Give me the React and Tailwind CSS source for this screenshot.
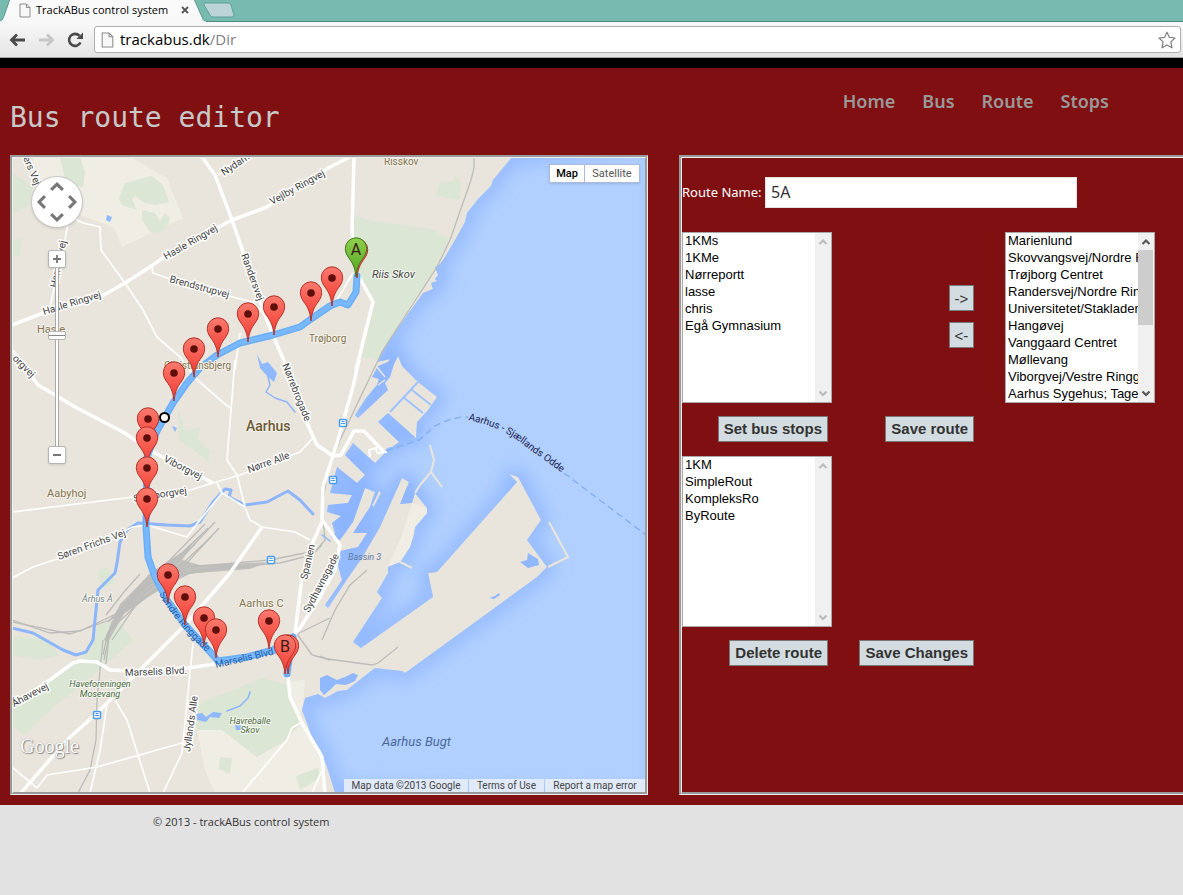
import React from "react";

const LAND = "#e9e5dc";
const SEA_PATH =
  "M512 157 L503 168 L493 180 L491 186 L478 199 L467 213 L465 222 L455 240 L445 257 L440 264 L435 267 L438 275 L435 279 L437 281 L431 283 L433 289 L423 293 L410 311 L398 327 L383 350 L377 362 L390 359 L388 362 L378 366 L372 377 L379 379 L377 385 L366 398 L355 415 L358 418 L388 390 L385 383 L390 377 L394 364 L398 356 L402 366 L407 371 L418 382 L437 397 L428 410 L417 422 L416 438 L388 413 L378 422 L399 442 L392 447 L387 448 L383 455 L375 463 L353 443 L345 455 L365 475 L357 483 L337 467 L330 493 L352 495 L348 503 L328 505 L327 512 L341 516 L332 523 L335 533 L331 537 L340 540 L353 522 L365 488 L375 492 L370 507 L353 533 L367 533 L358 547 L340 551 L338 566 L342 580 L325 605 L328 608 L348 578 L362 558 L380 527 L402 478 L409 482 L400 504 L412 503 L415 493 L427 508 L427 513 L415 527 L414 535 L410 547 L400 562 L388 567 L388 573 L377 592 L382 598 L353 642 L361 648 L433 597 L428 573 L437 572 L517 482 L509 474 L515 476 L518 477 L541 520 L527 540 L547 567 L537 577 L405 673 L402 671 L375 668 L353 685 L347 690 L338 691 L325 698 L318 694 L305 698 L302 710 L312 737 L321 751 L328 770 L335 793 L660 800 L660 140 Z";

const WIDE_ROADS = [
  "M202 157 L215 175 L232 220 L263 310 L275 340 L285 363 L307 423 L317 445 L333 456 L341 455 L354 431 L364 431 L384 452",
  "M12 325 L43 313 L100 297 L125 283 L150 267 L167 255 L217 228 L232 220 L267 207 L290 192 L330 167 L350 157",
  "M354 157 L352 233 L357 273 L373 302 L356 370",
  "M12 350 L38 385 L77 408 L123 432 L153 452 L213 483",
  "M262 527 L230 573 L187 623 L97 713 L67 740 L20 794",
  "M12 703 L43 685 L73 663 L80 661 L97 662 L110 670 L130 671 L187 668 L215 664",
  "M288 677 L290 697 L302 723 L322 757 L325 793",
  "M359 360 L353 387 L337 443 L323 487 L322 520 L340 545 L335 570 L320 597 L300 628 L295 634",
  "M322 522 L313 542 L302 577 L295 633",
];

const THIN_ROADS = [
  "M73 218 L83 223 L100 227 L101 250 L125 283 L143 310 L157 337 L180 357 L195 378 L225 404 L230 408",
  "M152 267 L153 273 L173 280 L233 297 L252 302 L262 312",
  "M68 223 L65 240 L50 307",
  "M218 175 L253 157",
  "M213 483 L240 475 L300 452 L313 438",
  "M12 512 L133 497 L190 490 L213 483",
  "M12 578 L33 567 L60 558 L133 527 L147 525 L187 537 L200 520 L222 493 L217 483",
  "M235 360 L227 460 L237 475 L245 507 L250 520 L262 527 L295 532 L310 540",
  "M222 493 L245 507",
  "M193 643 L187 703 L182 753 L163 793",
  "M115 700 L127 720 L150 793",
  "M107 702 L104 725 L100 750 L90 793",
  "M37 788 L47 775 L97 767 L182 743",
  "M12 767 L37 788",
  "M302 722 L292 728 L287 740 L242 793",
  "M322 770 L312 793",
  "M240 333 L235 370",
  "M353 273 L337 300",
];

const RAILS = [
  "M474 157 L474 168 L471 180 L450 240 L437 267 L383 350 L340 440 L328 470 L322 507 L325 540 L315 552",
  "M322 545 L312 555 L280 563 L220 568 L180 575 L140 600 L110 620 L70 634 L12 622",
  "M315 551 L270 560 L200 566 L160 580 L120 612 L80 631 L50 633 L12 620",
  "M103 640 L97 700 L96 740 L90 770 L78 793",
  "M322 640 L335 610 L350 585 L367 570",
  "M297 634 L312 655 L330 660",
  "M297 634 L330 618",
  "M320 656 L328 659 L372 665 L378 663 L398 647",
];

const YARD = [
  "M215 522 L180 560 L140 592 L112 622 L104 660",
  "M208 528 L176 560 L136 596 L110 628 L106 664",
  "M219 528 L184 566 L140 602 L108 632 L103 655",
  "M205 524 L170 560 L138 588 L114 618",
  "M212 536 L180 566 L145 592 L112 640",
  "M200 536 L168 566 L134 594 L116 625",
  "M240 566 L190 566 L150 584 L116 612",
  "M250 567 L196 570 L152 592 L118 616",
  "M195 545 L150 574 L128 600 L108 622",
  "M188 549 L150 580 L124 604 L106 640",
  "M140 574 L124 592 L106 615",
];

const ROUTE =
  "M357 276 L356 292 L348 305 L340 302 L330 306 L311 319 L300 327 L273 335 L240 343 L217 355 L200 368 L187 383 L173 403 L157 431 L147 457 L146 527 L148 557 L155 577 L167 600 L185 625 L213 655 L218 661 L247 657 L273 650 L293 637 L290 652 L287 674";

const PINS = [
  [332, 278], [311, 293], [274, 307], [248, 314], [218, 329], [194, 349],
  [174, 373], [148, 419], [147, 438], [147, 468], [147, 499], [168, 575],
  [185, 597], [204, 618], [269, 621], [216, 630],
];

const ROAD_LABELS = [
  ["Nydamsvej", 224, 176, -34],
  ["Vejlby Ringvej", 272, 205, -29],
  ["Hasle Ringvej", 166, 260, -30],
  ["Hasle Ringvej", 44, 315, -17],
  ["Brendstrupvej", 169, 282, 15],
  ["Randersvej", 241, 255, 70],
  ["Herredsvej", 57, 288, -79],
  ["ers Vej", 23, 158, 67],
  ["orgvej", 12, 359, 45],
  ["Nørrebrogade", 282, 365, 68],
  ["Viborgvej", 163, 461, 27],
  ["Silkeborgvej", 134, 502, -9],
  ["Nørre Alle", 249, 473, -20],
  ["Søren Frichs Vej", 59, 560, -20],
  ["Spanien", 307, 580, -77],
  ["Sydhavnsgade", 309, 613, -62],
  ["Marselis Blvd.", 125, 676, -2],
  ["Jyllands Alle", 190, 752, -82],
  ["Åhavevej", 14, 707, -28],
];

const START_STOPS = ["1KMs", "1KMe", "Nørreportt", "lasse", "chris", "Egå Gymnasium"];
const ROUTES = ["1KM", "SimpleRout", "KompleksRo", "ByRoute"];
const STOPS = [
  "Marienlund",
  "Skovvangsvej/Nordre Ringgade",
  "Trøjborg Centret",
  "Randersvej/Nordre Ringgade",
  "Universitetet/Stakladen",
  "Hangøvej",
  "Vanggaard Centret",
  "Møllevang",
  "Viborgvej/Vestre Ringgade",
  "Aarhus Sygehus; Tage Hansens",
];

function Pin({ x, y, letter, green }) {
  return (
    <g transform={`translate(${x} ${y})`}>
      <path
        d="M0 28 C-0.8 20 -2.5 15.500 -6 10.500 C-9 6.500 -10.700 3.500 -10.700 -0.500 A10.700 10.700 0 0 1 10.700 -0.500 C10.700 3.500 9 6.500 6 10.500 C2.500 15.500 0.800 20 0 28Z"
        fill={green ? "url(#pinGreen)" : "url(#pinRed)"}
        stroke={green ? "#3e7a1c" : "#b2322b"}
        strokeWidth="1"
      />
      {letter ? (
        <text y="6" textAnchor="middle" fontSize="16" fill="#3a1a14">{letter}</text>
      ) : (
        <circle r="3.800" fill="#5e0f0c" />
      )}
    </g>
  );
}

function Station({ x, y }) {
  return (
    <g transform={`translate(${x} ${y})`}>
      <rect x="-3.500" y="-3.500" width="7" height="7" rx="1" fill="#fff" stroke="#4a9be8" strokeWidth="1.500" />
      <path d="M-2 0.500H2M-1.500 -1.500H1.500" stroke="#4a9be8" />
    </g>
  );
}

function MapDrawing() {
  return (
    <svg
      viewBox="13 158 632 634"
      preserveAspectRatio="xMidYMid slice"
      className="block h-[634px] w-full font-[Roboto,sans-serif]"
      role="img"
      aria-label="Map of Aarhus with the bus route"
    >
      <defs>
        <clipPath id="sea"><path d={SEA_PATH} /></clipPath>
        <filter id="soft" x="-20%" y="-20%" width="140%" height="140%"><feGaussianBlur stdDeviation="9" /></filter>
        <linearGradient id="pinRed" x1="0" y1="0" x2="0" y2="1">
          <stop offset="0" stopColor="#fb7a6e" /><stop offset="1" stopColor="#f0392f" />
        </linearGradient>
        <linearGradient id="pinGreen" x1="0" y1="0" x2="0" y2="1">
          <stop offset="0" stopColor="#8fd04c" /><stop offset="1" stopColor="#4fa423" />
        </linearGradient>
        <path id="ferryLabel" d="M468 420 C500 427 515 437 530 450 C545 460 560 471 585 491" />
        <path id="ringLabel" d="M159 594 C172 617 190 638 216 660" />
      </defs>

      <rect x="-400" y="100" width="1500" height="760" fill={LAND} />

      <g fill="#f0ede4">
        <path d="M33 157H130L167 178L183 218L122 247L113 227L80 215L60 200L34 185Z" />
        <path d="M197 730L222 730L257 757L290 735L304 722L325 765V793H215L205 770Z" />
        <path d="M287 682L305 680L303 705L300 715L290 700Z" />
      </g>
      <g fill="#dce6d5">
        <path d="M353 215L373 221L430 229L449 238L437 267L410 306L377 360L362 357L373 303L358 273Z" />
        <path d="M440 182L453 181L455 175L461 182L460 197L457 201L436 195Z" />
        <path d="M125 183L152 176L163 185L169 202L155 205L145 203L135 196L132 199L137 210L122 205L119 198Z" />
        <path d="M142 210L155 213L160 221L165 213L170 218L167 227L158 233L150 232L142 220Z" />
        <path d="M60 157H80L85 172L83 187L66 184Z" />
        <path d="M12 173L33 187L28 207L12 213Z" />
        <path d="M13 240L22 238L19 257L13 256Z" />
        <path d="M178 410L186 431L200 427L198 440L210 451L208 461L193 450L179 440Z" />
        <path d="M12 637L47 638L60 655L40 660L12 655Z" />
        <path d="M12 700L50 681L83 657L97 625L117 620L133 640L120 652L75 690L48 712L25 735L12 726Z" />
        <path d="M98 570L107 568L115 582L101 590Z" />
        <path d="M195 705L220 695L262 678L287 685L291 703L302 720L287 740L257 757L222 730L197 730Z" />
        <path d="M296 776L318 768L320 778L300 790Z" />
        <path d="M220 757L232 758L230 774L219 769Z" />
      </g>

      <path d={SEA_PATH} fill="#b1d0ff" />
      <g clipPath="url(#sea)">
        <path d={SEA_PATH} fill="none" stroke="#8ab2ff" strokeWidth="12" filter="url(#soft)" />
      </g>
      <g fill="#8fb8ff">
        <path d="M320 678L327 675L337 680L345 677L353 673L358 675L355 681L346 685L336 684L331 689L324 695L320 690Z" />
        <path d="M520 562L527 560L528 553L538 559L539 565L528 568Z" />
        <path d="M489 598L495 596L499 593L500 595L494 599Z" />
        <path d="M257 354L262 364L268 362L277 373L274 382L268 377L260 368Z" />
        <path d="M107 215L112 217L110 222L106 220Z" />
        <path d="M172 426L177 428L175 432Z" />
        <path d="M196 714L202 713L206 717L213 712L222 713L219 718L210 717L206 722L197 720Z" />
        <path d="M235 725L244 726L241 730L236 730Z" />
      </g>
      <path d="M385 377L377 367M385 380L378 385" stroke={LAND} strokeWidth="1.500" />
      <path d="M390 412L418 382M403 397L423 413M412 390L431 405" stroke="#9fc3ff" strokeWidth="2" />
      <path d="M412 503L427 508V513L415 527L410 547L400 562L388 566L400 540Z" fill="#f0ede4" />
      <g fill="none" stroke={LAND} strokeWidth="2">
        <path d="M430 445L434 460L431 472L420 485L415 493M431 472L442 487" />
        <path d="M549 522L568 557L548 567M400 562L412 568M380 492L373 506" />
      </g>
      <path d="M386 451L419 440L435 426C445 421 455 417 468 417" fill="none" stroke="#86b0f5" strokeWidth="1.500" strokeDasharray="7 4" />
      <path d="M564 473L646 535" fill="none" stroke="#86b0f5" strokeWidth="1.500" strokeDasharray="7 4" />

      <path d="M192 545L150 574L120 604L104 640L108 642L124 614L150 596L186 574L250 569L270 562L200 565L182 560Z" fill="#c2c1be" />
      <g fill="none" stroke="#bcbcba" strokeWidth="1.300">
        {RAILS.map((d) => <path key={d} d={d} />)}
        {YARD.map((d) => <path key={d} d={d} />)}
      </g>
      <g fill="none" stroke="#8cb5fb" strokeLinejoin="round" strokeLinecap="round">
        <path strokeWidth="3" d="M138 523L167 525L190 526L200 522L213 502L225 489L231 490L229 497L245 505L267 502L288 491L300 500L313 514M138 523L127 530L120 542L117 563L115 573L98 590L93 640L86 652L76 655L63 650L33 633L12 628" />
        <path strokeWidth="1.500" d="M268 377L270 385L266 392L275 398L287 402L295 412M227 711L240 706L248 698L250 692M322 535L330 541" />
      </g>

      <g fill="none" stroke="#fff" strokeLinejoin="round">
        {THIN_ROADS.map((d) => <path key={d} d={d} strokeWidth="1.700" />)}
        {WIDE_ROADS.map((d) => <path key={d} d={d} strokeWidth="3.500" />)}
        <path d="M370 457L369 450L376 448L377 453L387 452" strokeWidth="2" />
      </g>
      <path d={ROUTE} fill="none" stroke="#6baef5" strokeWidth="7" strokeLinejoin="round" strokeLinecap="round" />
      <path d={ROUTE} fill="none" stroke="#78b8ff" strokeWidth="4" strokeLinejoin="round" />

      <Station x={343} y={423} />
      <Station x={333} y={480} />
      <Station x={271} y={560} />
      <Station x={97} y={715} />

      <g stroke="#fff" strokeWidth="3" strokeLinejoin="round" paintOrder="stroke" fill="#444" fontSize="10">
        {ROAD_LABELS.map(([t, x, y, a], i) => (
          <text key={i} transform={`translate(${x} ${y}) rotate(${a})`}>{t}</text>
        ))}
      </g>
      <g fontSize="10" fill="#2460a8">
        <text><textPath href="#ringLabel">Søndre Ringgade</textPath></text>
        <text transform="translate(216 668) rotate(-13)">Marselis Blvd.</text>
      </g>
      <g stroke="#f4f1ea" strokeWidth="2" strokeLinejoin="round" paintOrder="stroke" fill="#857550">
        <text x="384" y="165" fontSize="10">Risskov</text>
        <text x="309" y="342" fontSize="10">Trøjborg</text>
        <text x="37" y="333" fontSize="11">Hasle</text>
        <text x="164" y="369" fontSize="10">Christiansbjerg</text>
        <text x="47" y="497" fontSize="11">Aabyhoj</text>
        <text x="239" y="607" fontSize="11">Aarhus C</text>
        <text x="246" y="431" fontSize="14" fontWeight="500" fill="#6b5a35">Aarhus</text>
      </g>
      <g stroke="#f4f6ee" strokeWidth="2" strokeLinejoin="round" paintOrder="stroke" fontStyle="italic">
        <text x="372" y="278" fontSize="11" fill="#444">Riis Skov</text>
        <text x="82" y="602" fontSize="9" fill="#7b8794">Århus Å</text>
        <g fontSize="9" fill="#4c6b44" textAnchor="middle">
          <text x="100" y="687">Haveforeningen</text>
          <text x="100" y="697">Mosevang</text>
          <text x="250" y="724">Havreballe</text>
          <text x="250" y="733">Skov</text>
        </g>
      </g>
      <text x="348" y="560" fontSize="9" fontStyle="italic" fill="#5f7ba5">Bassin 3</text>
      <text x="382" y="746" fontSize="13" fontStyle="italic" fill="#4a6899">Aarhus Bugt</text>
      <text fontSize="10" fill="#20204f"><textPath href="#ferryLabel">Aarhus - Sjællands Odde</textPath></text>

      <circle cx="164.500" cy="417.500" r="4.500" fill="#fff" stroke="#000" strokeWidth="2" />
      {PINS.map(([x, y]) => <Pin key={`${x}-${y}`} x={x} y={y} />)}
      <Pin x={357} y={250} />
      <Pin x={356} y={249} letter="A" green />
      <Pin x={288} y={646} />
      <Pin x={285} y={646} letter="B" />
    </svg>
  );
}

function Chevron({ className }) {
  return (
    <svg viewBox="0 0 12 12" className={`size-[14px] ${className}`} aria-hidden="true">
      <path d="M1 8.500L6 3.500L11 8.500" fill="none" stroke="#777" strokeWidth="2.600" />
    </svg>
  );
}

function MapPanel() {
  const zoomButton =
    "flex h-[18px] w-[18px] items-center justify-center rounded-[2px] border border-[#b5b5b5] bg-white shadow-sm";
  return (
    <section className="min-w-0 flex-1 border-t-2 border-r border-b border-l-2 border-t-[#9a9a9a] border-r-[#eee] border-b-[#eee] border-l-[#9a9a9a]">
      <div className="relative overflow-hidden border-t border-r-2 border-b-2 border-l border-t-[#eee] border-r-[#9a9a9a] border-b-[#9a9a9a] border-l-[#eee]">
        <MapDrawing />

        <div className="absolute top-[18px] left-[18px] flex w-[52px] flex-col items-center">
          <div className="grid size-[52px] grid-cols-3 grid-rows-3 place-items-center rounded-full border border-[#c8c8c8] bg-white p-[3px] shadow">
            <button type="button" aria-label="Pan up" className="col-start-2 row-start-1"><Chevron className="" /></button>
            <button type="button" aria-label="Pan left" className="col-start-1 row-start-2"><Chevron className="-rotate-90" /></button>
            <button type="button" aria-label="Pan right" className="col-start-3 row-start-2"><Chevron className="rotate-90" /></button>
            <button type="button" aria-label="Pan down" className="col-start-2 row-start-3"><Chevron className="rotate-180" /></button>
          </div>
          <button type="button" aria-label="Zoom in" className={`mt-[22px] ${zoomButton}`}>
            <svg viewBox="0 0 8 8" className="size-2"><path d="M4 0V8M0 4H8" stroke="#777" strokeWidth="1.800" /></svg>
          </button>
          <input
            type="range"
            aria-label="Zoom level"
            min="0"
            max="16"
            defaultValue="10"
            className="m-0 h-[178px] w-[18px] appearance-none bg-[linear-gradient(90deg,transparent_7px,#aaa_7px,#aaa_8px,#fff_8px,#fff_10px,#aaa_10px,#aaa_11px,transparent_11px)] [direction:rtl] [writing-mode:vertical-lr] [&::-webkit-slider-thumb]:h-[9px] [&::-webkit-slider-thumb]:w-[18px] [&::-webkit-slider-thumb]:appearance-none [&::-webkit-slider-thumb]:rounded-[2px] [&::-webkit-slider-thumb]:border [&::-webkit-slider-thumb]:border-[#b5b5b5] [&::-webkit-slider-thumb]:bg-[linear-gradient(#fff_3px,#888_3px,#888_4px,#fff_4px)]"
          />
          <button type="button" aria-label="Zoom out" className={zoomButton}>
            <svg viewBox="0 0 8 8" className="size-2"><path d="M0 4H8" stroke="#777" strokeWidth="2" /></svg>
          </button>
        </div>

        <div className="absolute top-[6px] right-[5px] flex h-[19px] border border-[#a9bbdf] bg-white font-[Roboto,sans-serif] text-[11px] leading-[17px] shadow-sm">
          <button type="button" className="w-[34px] font-medium text-black">Map</button>
          <button type="button" className="w-[55px] border-l border-[#a9bbdf] text-[#565656]">Satellite</button>
        </div>

        <a
          href="#google"
          className="absolute bottom-[34px] left-[7px] font-['Liberation_Serif',serif] text-[20px] leading-6 text-white [text-shadow:1px_1px_1px_#888,0_0_1px_#888]"
        >
          Google
        </a>

        <div className="absolute right-0 bottom-0 flex gap-px font-[Roboto,sans-serif] text-[10px] leading-[13px] text-[#444]">
          <span className="w-[124px] bg-[#e1eaf9] text-center">Map data ©2013 Google</span>
          <a href="#terms" className="w-[75px] bg-[#e1eaf9] text-center">Terms of Use</a>
          <a href="#report" className="w-[100px] bg-[#e1eaf9] text-center">Report a map error</a>
        </div>
      </div>
    </section>
  );
}

function ListBox({ label, items, scrollable }) {
  const arrow = scrollable ? "#555" : "#bcbcbc";
  return (
    <div className="flex h-[171px] w-[150px] border border-[#a9a9a9] bg-white">
      <select
        multiple
        size={10}
        aria-label={label}
        className="h-full min-w-0 flex-1 appearance-none overflow-hidden bg-white p-0 font-['Liberation_Sans',sans-serif] text-[13px] text-black outline-none"
      >
        {items.map((item) => (
          <option key={item} className="h-[17px] min-h-0 px-[2px] py-0 leading-[18px]">{item}</option>
        ))}
      </select>
      <div className="flex w-4 flex-col items-center bg-[#f0f0f0]" aria-hidden="true">
        <svg viewBox="0 0 16 17" className="h-[17px] w-4"><path d="M4.500 11L8 7.500L11.500 11" fill="none" stroke={arrow} strokeWidth="2.200" /></svg>
        <div className="flex-1 self-stretch">
          {scrollable && <div className="h-[75px] w-[15px] bg-[#cdcdcd]" />}
        </div>
        <svg viewBox="0 0 16 17" className="h-[17px] w-4"><path d="M4.500 6.500L8 10L11.500 6.500" fill="none" stroke={arrow} strokeWidth="2.200" /></svg>
      </div>
    </div>
  );
}

function ActionButton({ children }) {
  return (
    <button
      type="button"
      className="h-[26px] border border-[#787878] bg-[#d3dce0] px-[5px] font-['Liberation_Sans',sans-serif] text-[15px] leading-6 font-semibold whitespace-nowrap text-[#333]"
    >
      {children}
    </button>
  );
}

function MoveButton({ label, children }) {
  return (
    <button
      type="button"
      aria-label={label}
      className="h-[26px] w-[25px] border border-[#787878] bg-[#d3dce0] pt-px text-center font-['Liberation_Sans',sans-serif] text-[15px] leading-6 whitespace-nowrap text-[#333]"
    >
      {children}
    </button>
  );
}

function EditorPanel() {
  return (
    <section className="w-[504px] shrink-0 border-t-2 border-b border-l-2 border-t-[#9a9a9a] border-b-[#eee] border-l-[#9a9a9a]">
      <div className="h-full border-t border-b-2 border-l border-t-[#eee] border-b-[#9a9a9a] border-l-[#eee] pt-[19px]">
        <div className="flex items-center gap-1">
          <label htmlFor="route-name" className="w-[79px] pt-px text-[13px] whitespace-nowrap text-white">Route Name:</label>
          <input
            id="route-name"
            type="text"
            defaultValue="5A"
            className="h-[31px] w-[312px] border border-[#e2e2e2] bg-white px-[5px] pb-[2px] text-[16px] text-[#333] outline-none"
          />
        </div>
        <div className="mt-6 grid grid-cols-[150px_142px_auto]">
          <ListBox label="Route end points" items={START_STOPS} />
          <div className="flex flex-col items-end gap-[11px] pt-[53px]">
            <MoveButton label="Add stop">-&gt;</MoveButton>
            <MoveButton label="Remove stop">&lt;-</MoveButton>
          </div>
          <div className="pl-[31px]">
            <ListBox label="Bus stops" items={STOPS} scrollable />
          </div>
          <div className="flex justify-end pt-[13px] pr-1 pb-[14px]"><ActionButton>Set bus stops</ActionButton></div>
          <div className="col-start-2 flex justify-end pt-[13px] pb-[14px]"><ActionButton>Save route</ActionButton></div>
          <div className="col-start-1"><ListBox label="Routes" items={ROUTES} /></div>
          <div className="col-start-1 flex justify-end pt-[13px] pr-1"><ActionButton>Delete route</ActionButton></div>
          <div className="col-start-2 flex justify-end pt-[13px]"><ActionButton>Save Changes</ActionButton></div>
        </div>
      </div>
    </section>
  );
}

function PageIcon({ className }) {
  return (
    <svg viewBox="0 0 12 15" className={className} aria-hidden="true">
      <path d="M1 1H7.500L11 4.500V14H1Z" fill="#f8f8f8" stroke="#8c8c8c" />
      <path d="M7.500 1V4.500H11" fill="none" stroke="#8c8c8c" />
    </svg>
  );
}

function BrowserBar() {
  return (
    <div className="font-['Open_Sans',sans-serif]">
      <div className="flex h-[22px] border-b border-[#4f8a82] bg-[#76bab0]">
        <div className="relative h-[22px] w-[206px]">
          <svg viewBox="0 0 206 22" className="absolute inset-0 h-[22px] w-[206px]" aria-hidden="true">
            <path d="M0 22V21C3 20 3 18 4 16L10 -1H194L202 17C203 20 204 21 206 21V22Z" fill="#f9f9f9" />
            <path d="M0 21C3 20 3 18 4 16L10 -1M194 -1L202 17C203 20 204 21 206 21" fill="none" stroke="#5b9b92" />
          </svg>
          <div className="relative flex h-5 items-center justify-between pr-[17px] pl-[19px]">
            <div className="flex items-center gap-[5px]">
              <PageIcon className="h-[15px] w-3" />
              <span className="text-[11px] whitespace-nowrap text-black">TrackABus control system</span>
            </div>
            <button type="button" aria-label="Close tab">
              <svg viewBox="0 0 8 8" className="size-2"><path d="M1 1L7 7M7 1L1 7" stroke="#555" strokeWidth="1.800" /></svg>
            </button>
          </div>
        </div>
        <button type="button" aria-label="New tab" className="-ml-1 h-5">
          <svg viewBox="0 0 34 20" className="h-5 w-[34px]"><path d="M3 3H26Q28 3 29 5L32 15Q32 17 30 17H11Q9 17 8 15L2 5Q1 3 3 3Z" fill="#bcd4d8" stroke="#609f97" /></svg>
        </button>
      </div>
      <div className="flex h-9 items-center border-b border-[#a5a5a5] bg-linear-to-b from-[#f9f9f9] to-[#e4e4e4] pr-[2px] pl-[9px]">
        <button type="button" aria-label="Back">
          <svg viewBox="0 0 17 16" className="h-4 w-[17px]"><path d="M16 8H3M8 2.500L2.500 8L8 13.500" fill="none" stroke="#4a4a4a" strokeWidth="2.800" /></svg>
        </button>
        <button type="button" aria-label="Forward" className="ml-3">
          <svg viewBox="0 0 17 16" className="h-4 w-[17px]"><path d="M1 8H14M9 2.500L14.500 8L9 13.500" fill="none" stroke="#c6c6c6" strokeWidth="2.800" /></svg>
        </button>
        <button type="button" aria-label="Reload" className="ml-3">
          <svg viewBox="0 0 17 16" className="h-4 w-[17px]">
            <path d="M13.500 10.500A6 6 0 1 1 12.500 3.800" fill="none" stroke="#4a4a4a" strokeWidth="2.600" />
            <path d="M16 0.500V7H9.500Z" fill="#4a4a4a" />
          </svg>
        </button>
        <div className="ml-[10px] flex h-[27px] min-w-0 flex-1 items-center rounded-[3px] border border-[#b0b0b0] bg-white pr-1 pl-[6px]">
          <PageIcon className="h-4 w-[13px]" />
          <div className="ml-[6px] flex-1 pb-[2px] text-[15px] leading-6 text-black">
            trackabus.dk<span className="text-[#808080]">/Dir</span>
          </div>
          <button type="button" aria-label="Bookmark this page">
            <svg viewBox="0 0 18 18" className="size-[18px]">
              <path d="M9 1.200L11.300 6.300L17 7L12.900 10.900L14 16.800L9 14L4 16.800L5.100 10.900L1 7L6.700 6.300Z" fill="#fff" stroke="#808080" strokeWidth="1.200" strokeLinejoin="round" />
            </svg>
          </button>
        </div>
      </div>
    </div>
  );
}

export default function App() {
  return (
    <div className="min-h-screen overflow-x-hidden bg-[#e2e2e2] font-['Noto_Sans',sans-serif]">
      <BrowserBar />
      <div className="border-t-[10px] border-black bg-[#800f12] pb-[10px]">
        <header className="flex h-[87px] items-start justify-between pr-[74px] pl-[10px]">
          <h1 className="pt-8 font-['DejaVu_Sans_Mono',monospace] text-[28px] leading-9 text-[#c8c8c8]">Bus route editor</h1>
          <nav className="flex gap-[27px] pt-[21px] text-[18px] leading-6 font-semibold text-[#999]">
            <a href="#home">Home</a>
            <a href="#bus">Bus</a>
            <a href="#route">Route</a>
            <a href="#stops">Stops</a>
          </nav>
        </header>
        <main className="flex gap-[31px] pl-[10px]">
          <MapPanel />
          <EditorPanel />
        </main>
      </div>
      <footer className="pt-[9px] pl-[153px] font-['Open_Sans',sans-serif] text-[11px] leading-4 text-[#333]">© 2013 - trackABus control system</footer>
    </div>
  );
}
